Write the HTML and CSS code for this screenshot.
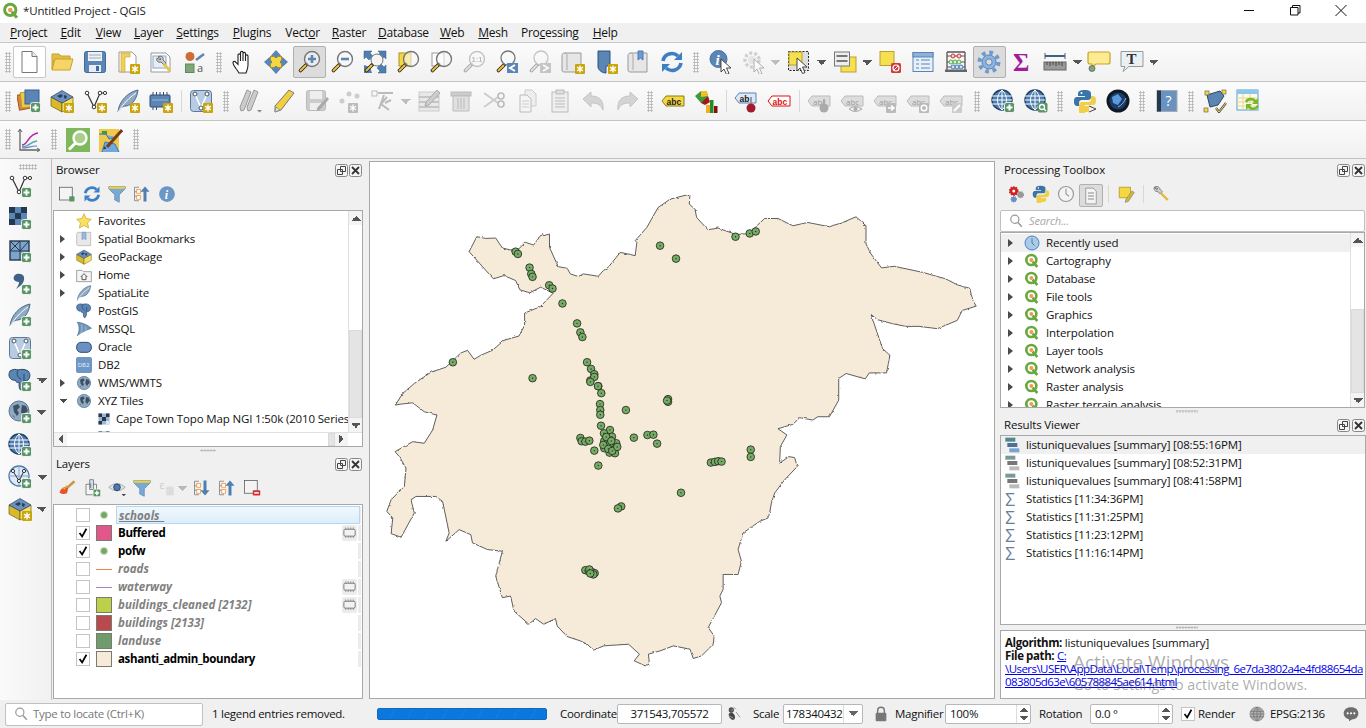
FILE: index.html
```html
<!DOCTYPE html>
<html lang="en">
<head>
<meta charset="utf-8">
<title>*Untitled Project - QGIS</title>
<link rel="stylesheet" href="styles.css">
</head>
<body>
<svg class="defs" aria-hidden="true">
<defs>
<g id="bstar"><rect x="14" y="14" width="10" height="10" rx="1" fill="#c9a40a"/><path d="M19 15.5v7M16 17.2l6 3.6M16 20.8l6-3.6" stroke="#fff" stroke-width="1.4"/></g>
<g id="bplus"><rect x="13.5" y="13.5" width="10" height="10" rx="2" fill="#5a9467" stroke="#fff" stroke-width=".8"/><path d="M18.5 15.5v6M15.5 18.5h6" stroke="#fff" stroke-width="2"/></g>
<path id="cur" d="M0 0v13l3-3 2.5 5.5 2.5-1-2.5-5.5h4.5z" fill="#fff" stroke="#333" stroke-width=".9"/>
<g id="mh"><path d="M9.5 14.5L3.5 20.5" stroke="#222" stroke-width="3.6" stroke-linecap="round"/><path d="M8.5 15.5L3.5 20.5" stroke="#eec23c" stroke-width="1.9" stroke-linecap="round"/></g>
<circle id="lens" cx="15" cy="9" r="7.5" fill="#f8f8f8" fill-opacity=".6" stroke="#777" stroke-width="1.4"/>
<g id="Vg"><path d="M4 4l7 14 6-14 5 0" fill="none" stroke="#333" stroke-width="1.2"/><circle cx="4" cy="4" r="1.8" fill="#fff" stroke="#333"/><circle cx="11" cy="18" r="1.8" fill="#fff" stroke="#333"/><circle cx="17" cy="4" r="1.8" fill="#fff" stroke="#333"/><circle cx="22" cy="4" r="1.6" fill="#fff" stroke="#333"/></g>
<g id="fth"><path d="M2 23C3 12 12 3 22 1c-1 8-5 15-12 16-3 0-5 1-8 6z" fill="#8fa9c4" stroke="#4a6a8a"/><path d="M2 23C8 14 13 9 20 4" stroke="#fff" fill="none"/></g>
<g id="gb"><circle cx="11" cy="11" r="10" fill="#8fa9c4" stroke="#5a7590"/><path d="M5 6l5-2 2 3-3 3 2 3-2 3-3-4zM14 5l4 1 2 5-3 2-1 3-3-4zM4 15l2 1 1 2z" fill="#3e4f60"/></g>
<g id="gridg"><circle cx="11" cy="11" r="10" fill="#4d7cb0" stroke="#1f3f66" stroke-width="1.4"/><path d="M1 7h20M1 11h20M1 15h20M11 1c-6 5-6 15 0 20M11 1c6 5 6 15 0 20M11 1v20" stroke="#fff" stroke-width="1" fill="none"/></g>
<g id="eleph"><path d="M2 3c3-2 6-2 8-1 3-1 7-1 10 1 3 3 2 7 0 9-2 1-3 1-4 1 0 4-1 9-3 9s-2-5-2-8c-2 1-3 0-4-2-3 1-6-2-6-5 0-1 0-2 1-4z" fill="#5b85b5" stroke="#2a4a6a"/><path d="M10 2c-2 4 0 8 3 9M16 6v7" stroke="#2a4a6a" fill="none"/></g>
<g id="boxg"><path d="M1 8l11 6v9L1 17z" fill="#d9b92a" stroke="#6f6010" stroke-width=".7"/><path d="M23 8L12 14v9l11-6z" fill="#f3df62" stroke="#6f6010" stroke-width=".7"/><path d="M1 8l11-6.500 11 6.500-11 6z" fill="#6b8fc0" stroke="#345" stroke-width=".7"/><path d="M7 7l4-2 2 2-3 2zM14 6l3 1-1 3-2-1z" fill="#2c3f55"/></g>
<g id="scroll"><path d="M4 3C1 3 1 5 1 6v14c0 2 2 2 3 2h16V3z" fill="#e6e6e6" stroke="#999"/><path d="M4 3c2 0 2 2 2 3v14" fill="none" stroke="#aaa"/></g>
<g id="meshg"><rect x="1.500" y="1.500" width="21" height="21" rx="3" fill="#b7cbe2" stroke="#5f7a99"/><path d="M6 5l6 14 6-14" fill="none" stroke="#fff" stroke-width="1.600"/><circle cx="6" cy="5" r="2" fill="#fff" stroke="#456"/><circle cx="12" cy="19" r="2" fill="#fff" stroke="#456"/><circle cx="18" cy="5" r="2" fill="#fff" stroke="#456"/></g>
<g id="tagg"><path d="M1 12l4-5h18v10H5z" fill="#ddd" stroke="#bbb"/><text class="ts" x="6" y="15.500" font-size="8" fill="#999">abc</text></g>
<g id="q"><circle cx="11" cy="10.500" r="7.500" fill="#fff" stroke="#6aa83f" stroke-width="4"/><path d="M13 13l7 8" stroke="#6aa83f" stroke-width="4"/><circle cx="11" cy="10.500" r="3" fill="#ee9b4a"/></g>
<symbol id="sq" viewBox="0 0 24 24"><use href="#q"/></symbol>
<symbol id="new" viewBox="0 0 24 24"><path d="M5 1.500h10l5 5v16H5z" fill="#fff" stroke="#777"/><path d="M15 1.500v5h5" fill="#eee" stroke="#777"/></symbol>
<symbol id="open" viewBox="0 0 24 24"><path d="M2 4h7l2 2h9v4H4L2 19z" fill="#e0bc48" stroke="#c9a227"/><path d="M5 9h18l-3 11H2z" fill="#f6d568" stroke="#c9a227"/></symbol>
<symbol id="save" viewBox="0 0 24 24"><rect x="1.500" y="1.500" width="21" height="21" rx="2" fill="#5b85b5" stroke="#3f6a9a"/><rect x="5" y="2" width="14" height="9" fill="#eef2f7"/><path d="M6 5h12M6 8h12" stroke="#9ab"/><rect x="6" y="15" width="12" height="7" fill="#e8edf3"/><rect x="13" y="16" width="3" height="5" fill="#3f6a9a"/></symbol>
<symbol id="saveas" viewBox="0 0 24 24"><path d="M3 2h13l4 4v16H3z" fill="#fff" stroke="#999"/><path d="M5 3h9v4H9v15H5z" fill="#f0cf5a" stroke="#c9a227" stroke-width=".6"/><use href="#bstar"/></symbol>
<symbol id="props" viewBox="0 0 24 24"><path d="M2 3h15l4 4v15H2z" fill="#fff" stroke="#999"/><rect x="4" y="6" width="13" height="12" fill="#e7eef7" stroke="#8aa8cc"/><path d="M9 7c3-2 6 0 5 3l3 3-2 2-3-3c-3 1-5-1-4-4l3 2 1-1z" fill="#ccc" stroke="#555" stroke-width=".8"/><path d="M15 14l6 7" stroke="#e8c44a" stroke-width="3"/></symbol>
<symbol id="style" viewBox="0 0 24 24"><circle cx="8" cy="6.500" r="4.500" fill="#cf6c38"/><path d="M14 10l8-6" stroke="#5b85b5" stroke-width="2.500"/><rect x="3.500" y="14" width="8.500" height="8.500" fill="#7fa77a" stroke="#5d8a5d"/><text class="ts" x="15" y="22" font-size="11" fill="#555">a</text></symbol>
<symbol id="hand" viewBox="0 0 24 24"><path d="M8 23C6 19 2 16 2 12.500c0-1.500 2-1.500 3 0l2 2V5c0-1.500 2.500-1.500 2.500 0v6V2.500c0-1.500 2.500-1.500 2.500 0V11V3.500c0-1.500 2.500-1.500 2.500 0V11V6c0-1.500 2.500-1.500 2.500 0v9c0 3-1 5-2 8z" fill="#fff" stroke="#222" stroke-width="1.100"/></symbol>
<symbol id="pansel" viewBox="0 0 24 24"><rect x="6.500" y="6.500" width="11" height="11" fill="#f5d840" stroke="#a89228"/><path d="M12 .5l4.500 5h-9zM12 23.500l4.500-5h-9zM.5 12l5-4.500v9zM23.500 12l-5-4.500v9z" fill="#5b85b5" stroke="#34608f" stroke-width=".6"/><path d="M12 5v3M12 16v3M5 12h3M16 12h3" stroke="#5b85b5" stroke-width="2.500"/></symbol>
<symbol id="zin" viewBox="0 0 24 24"><use href="#mh"/><use href="#lens"/><path d="M15 5v8M11 9h8" stroke="#5b85b5" stroke-width="2.600"/></symbol>
<symbol id="zout" viewBox="0 0 24 24"><use href="#mh"/><use href="#lens"/><path d="M11 9h8" stroke="#5b85b5" stroke-width="2.600"/></symbol>
<symbol id="zfull" viewBox="0 0 24 24"><path d="M1 1h8L7 3l3 3-4 4-3-3-2 2zM23 1h-8l2 2-3 3 4 4 3-3 2 2zM23 23h-8l2-2-3-3 4-4 3 3 2-2z" fill="#4f7eb0" stroke="#2f5d8e" stroke-width=".5"/><path d="M1 15l6 2 2 6H1z" fill="#4f7eb0"/><use href="#mh"/><circle cx="14" cy="10" r="6" fill="#f4f4f4" stroke="#777"/></symbol>
<symbol id="zsel" viewBox="0 0 24 24"><rect x="3" y="3" width="12" height="13" fill="#f5d840" stroke="#a89228"/><use href="#mh"/><use href="#lens"/></symbol>
<symbol id="zlayer" viewBox="0 0 24 24"><rect x="3" y="3" width="12" height="13" fill="#fff" stroke="#999"/><use href="#mh"/><use href="#lens"/></symbol>
<symbol id="z11" viewBox="0 0 24 24"><use href="#mh"/><use href="#lens"/><text class="tb2" x="9.500" y="11.500" font-size="7.500" fill="#666">1:1</text></symbol>
<symbol id="zlast" viewBox="0 0 24 24"><use href="#mh"/><circle cx="13" cy="8" r="7" fill="#f8f8f8" stroke="#777" stroke-width="1.300"/><rect x="12" y="13" width="11" height="10" fill="#5b85b5"/><path d="M20 15l-5 3 5 3" fill="none" stroke="#fff" stroke-width="2"/></symbol>
<symbol id="znext" viewBox="0 0 24 24"><use href="#mh"/><circle cx="13" cy="8" r="7" fill="#f8f8f8" stroke="#777" stroke-width="1.300"/><rect x="12" y="13" width="11" height="10" fill="#5b85b5"/><path d="M15 15l5 3-5 3" fill="none" stroke="#fff" stroke-width="2"/></symbol>
<symbol id="bmnew" viewBox="0 0 24 24"><use href="#scroll"/><use href="#bstar"/></symbol>
<symbol id="bmshow" viewBox="0 0 24 24"><path d="M4 1h12v15h-4v7C7 23 4 19 4 17z" fill="#5b85b5" stroke="#2c5280"/><use href="#bstar"/></symbol>
<symbol id="bm3" viewBox="0 0 24 24"><use href="#scroll"/><path d="M11 1h5v9l-2.500-2-2.500 2z" fill="#6b9bd2" stroke="#4a7ab0"/></symbol>
<symbol id="refresh" viewBox="0 0 24 24"><path d="M3 11a9 9 0 0 1 15-5" fill="none" stroke="#3d7fc4" stroke-width="3.600"/><path d="M22 2v8h-8z" fill="#3d7fc4"/><path d="M21 13a9 9 0 0 1-15 5" fill="none" stroke="#3d7fc4" stroke-width="3.600"/><path d="M2 22v-8h8z" fill="#3d7fc4"/></symbol>
<symbol id="ident" viewBox="0 0 24 24"><circle cx="9.500" cy="9" r="8.500" fill="#5b85b5" stroke="#4a72a0"/><text class="ti" x="6.500" y="14.500" font-size="15" fill="#fff">i</text><use href="#cur" x="12" y="9"/></symbol>
<symbol id="selc" viewBox="0 0 24 24"><circle cx="10" cy="10" r="7" fill="none" stroke="#999" stroke-width="3.500" stroke-dasharray="3 2"/><circle cx="10" cy="10" r="4" fill="#ccc"/><use href="#cur" x="12" y="9"/></symbol>
<symbol id="selr" viewBox="0 0 24 24"><rect x="1.500" y="1.500" width="20" height="19" fill="#ddd" stroke="#222" stroke-dasharray="2 1.500"/><rect x="2" y="2" width="13" height="13" fill="#f5e050" stroke="#b9a030"/><use href="#cur" x="10" y="8"/></symbol>
<symbol id="form" viewBox="0 0 24 24"><rect x="8" y="7" width="15" height="15" fill="#f5e050" stroke="#b9a030"/><rect x="1.500" y="2" width="15" height="14" fill="#eee" stroke="#777"/><path d="M3.500 6h11M3.500 11h11" stroke="#777" stroke-width="2"/></symbol>
<symbol id="desel" viewBox="0 0 24 24"><rect x="2" y="1.500" width="14" height="14" fill="#f5e050" stroke="#b9a030"/><rect x="13" y="13" width="10" height="10" rx="1.500" fill="#d03a3a"/><circle cx="18" cy="18" r="3" stroke="#fff" fill="none" stroke-width="1.200"/><path d="M15.900 20.100l4.200-4.200" stroke="#fff"/></symbol>
<symbol id="attr" viewBox="0 0 24 24"><rect x="2" y="2.500" width="20" height="19" fill="#e8f0f8" stroke="#5b85b5"/><rect x="2" y="2.500" width="20" height="4.500" fill="#8fb0d8" stroke="#5b85b5"/><path d="M5 10h3M5 14h3M5 18h3M10 10h9M10 14h9M10 18h9" stroke="#5b85b5"/></symbol>
<symbol id="abac" viewBox="0 0 24 24"><path d="M3 2v19M21 2v19M3 2h18" fill="none" stroke="#555" stroke-width="1.300"/><rect x="1" y="19.500" width="22" height="2.500" fill="#666"/><path d="M3 6h18M3 12h18M3 17h18" stroke="#555"/><circle cx="9" cy="6" r="2" fill="#f8d0d0" stroke="#c33"/><circle cx="15" cy="6" r="2" fill="#f8d0d0" stroke="#c33"/><circle cx="7" cy="12" r="2" fill="#d8f0d0" stroke="#5a5"/><circle cx="11" cy="12" r="2" fill="#d8f0d0" stroke="#5a5"/><circle cx="15" cy="12" r="2" fill="#d8f0d0" stroke="#5a5"/><circle cx="9" cy="17" r="2" fill="#d0e4f8" stroke="#47b"/><circle cx="13" cy="17" r="2" fill="#d0e4f8" stroke="#47b"/><circle cx="17" cy="17" r="2" fill="#d0e4f8" stroke="#47b"/></symbol>
<symbol id="gear" viewBox="0 0 24 24"><circle cx="12" cy="12" r="9.500" fill="none" stroke="#6b9bd2" stroke-width="4" stroke-dasharray="3.730 3.730"/><circle cx="12" cy="12" r="7" fill="#8db3e2" stroke="#5b85b5"/><circle cx="12" cy="12" r="3.200" fill="#dcdcdc" stroke="#5b85b5"/></symbol>
<symbol id="sigma" viewBox="0 0 24 24"><text class="tsg" x="3" y="21" font-size="25" fill="#a01c9c">Σ</text></symbol>
<symbol id="ruler" viewBox="0 0 24 24"><path d="M2 6h20" stroke="#44607f" stroke-width="2"/><path d="M2 3v6M22 3v6" stroke="#44607f"/><rect x="1" y="12" width="22" height="8" fill="#999" stroke="#666"/><path d="M4 12v3M7 12v4M10 12v3M13 12v4M16 12v3M19 12v4" stroke="#444"/></symbol>
<symbol id="tip" viewBox="0 0 24 24"><path d="M3 2h18q2 0 2 2v8q0 2-2 2H9l-4 3v-3H3q-2 0-2-2V4q0-2 2-2z" fill="#fdeb92" stroke="#c9a227" stroke-width="1.200"/><circle cx="5" cy="18.500" r="3" fill="#7fa77a" stroke="#555" stroke-width=".7"/></symbol>
<symbol id="ttext" viewBox="0 0 24 24"><path d="M1 1.500h22v15H9l-6 5 2-5H1z" fill="#eaf1f5" stroke="#999"/><text class="tsg" x="6.500" y="14" font-size="15" fill="#333">T</text></symbol>
<symbol id="dsm" viewBox="0 0 24 24"><rect x="1" y="5" width="14" height="15" fill="#d8843c" stroke="#a05a20" transform="rotate(-10 8 12)"/><rect x="4" y="3" width="14" height="15" fill="#f0c94a" stroke="#b9a030" transform="rotate(-6 11 10)"/><rect x="8" y="1" width="14" height="14" fill="#5b85b5" stroke="#34608f"/><use href="#bplus"/></symbol>
<symbol id="box" viewBox="0 0 24 24"><use href="#boxg"/><use href="#bstar"/></symbol>
<symbol id="newv" viewBox="0 0 24 24"><use href="#Vg"/><use href="#bstar"/></symbol>
<symbol id="fstar" viewBox="0 0 24 24"><use href="#fth"/><use href="#bstar"/></symbol>
<symbol id="feather" viewBox="0 0 24 24"><use href="#fth"/></symbol>
<symbol id="chip" viewBox="0 0 24 24"><rect x="1" y="6" width="20" height="12" rx="1" fill="#5b85b5" stroke="#2f4f70"/><path d="M4 3v3M7.500 3v3M11 3v3M14.500 3v3M18 3v3M4 18v3M7.500 18v3" stroke="#2f4f70"/><path d="M3 11h16" stroke="#9ab8d8"/><use href="#bstar"/></symbol>
<symbol id="meshs" viewBox="0 0 24 24"><use href="#meshg"/><use href="#bstar"/></symbol>
<symbol id="pens" viewBox="0 0 24 24"><path d="M8 1l4 2-7 18-3 1-1-4zM15 1l4 2-7 18-3 1-1-4z" fill="#ccc" stroke="#999"/><path d="M18 21l5 0-2.500 2.500z" fill="#888"/></symbol>
<symbol id="pencil" viewBox="0 0 24 24"><path d="M17 1l5 3L9 21l-6 2 0-6z" fill="#f0d040" stroke="#777"/><path d="M3 23l1-5 4 3z" fill="#ddd" stroke="#777" stroke-width=".6"/></symbol>
<symbol id="savep" viewBox="0 0 24 24"><rect x="1.500" y="1.500" width="19" height="20" rx="2" fill="#ccc" stroke="#bbb"/><rect x="5" y="2" width="12" height="8" fill="#eee"/><rect x="5" y="14" width="11" height="7" fill="#eee"/><path d="M22 8l2 2-9 11-3 1 0-3z" fill="#aaa"/></symbol>
<symbol id="pts" viewBox="0 0 24 24"><circle cx="4" cy="12" r="2.500" fill="#ccc"/><circle cx="11" cy="5" r="2.500" fill="#ccc"/><circle cx="19" cy="7" r="2.500" fill="#ccc"/><rect x="10" y="14" width="10" height="10" rx="1" fill="#bbb"/><path d="M15 15.500v7M12 17.200l6 3.600M12 20.800l6-3.600" stroke="#fff" stroke-width="1.300"/></symbol>
<symbol id="vtool" viewBox="0 0 24 24"><rect x="1" y="2" width="5" height="5" fill="none" stroke="#bbb"/><path d="M7 4h15M8 20l5-14M16 8l-6 7 8 6M14 14l6-3" fill="none" stroke="#bbb" stroke-width="2"/></symbol>
<symbol id="rows" viewBox="0 0 24 24"><rect x="2" y="3" width="20" height="19" fill="#e8e8e8" stroke="#ccc"/><path d="M2 8h20M2 13h20M2 18h20" stroke="#bbb" stroke-width="1.500"/><path d="M20 1l3 3-11 12-4 1 1-4z" fill="#ccc" stroke="#aaa"/></symbol>
<symbol id="trash" viewBox="0 0 24 24"><rect x="1" y="3" width="20" height="4" fill="#ccc" stroke="#bbb"/><path d="M3 7h16v15H3z" fill="#e0e0e0" stroke="#bbb"/><path d="M8 9v11M11 9v11M14 9v11" stroke="#bbb"/></symbol>
<symbol id="sciss" viewBox="0 0 24 24"><path d="M1 4l14 10M1 18L15 8" stroke="#ccc" stroke-width="1.800"/><circle cx="18" cy="7" r="3" fill="none" stroke="#bbb" stroke-width="1.600"/><circle cx="18" cy="15" r="3" fill="none" stroke="#bbb" stroke-width="1.600"/></symbol>
<symbol id="copyi" viewBox="0 0 24 24"><path d="M9 1h7l4 4v12H9z" fill="#eee" stroke="#ccc"/><path d="M4 6h7l4 4v13H4z" fill="#f5f5f5" stroke="#bbb"/><path d="M6 12h7M6 15h7M6 18h7" stroke="#ccc"/></symbol>
<symbol id="paste" viewBox="0 0 24 24"><rect x="3" y="3" width="16" height="20" fill="#eee" stroke="#bbb"/><rect x="7" y="1" width="8" height="4" fill="#ddd" stroke="#bbb"/><path d="M6 9h10M6 12h10M6 15h10M6 18h10" stroke="#bbb"/></symbol>
<symbol id="undo" viewBox="0 0 24 24"><path d="M1 10l8-7v4c8 0 13 4 12 14-2-5-5-7-12-7v4z" fill="#d4d4d4" stroke="#c4c4c4"/></symbol>
<symbol id="redo" viewBox="0 0 24 24"><path d="M23 10l-8-7v4C7 7 2 11 3 21c2-5 5-7 12-7v4z" fill="#d4d4d4" stroke="#c4c4c4"/></symbol>
<symbol id="lbl" viewBox="0 0 24 24"><path d="M1 12l4-5h18v10H5z" fill="#f5d840" stroke="#8a7a20"/><text class="tb2" x="5.500" y="15.500" font-size="8.500" fill="#222">abc</text></symbol>
<symbol id="diag" viewBox="0 0 24 24"><path d="M1 7l6-5 7 3-1 7-6 2z" fill="#3c9a3c"/><path d="M7 2l6 0 1 5-7 1z" fill="#f0c020"/><path d="M14 7l2 6-5 3-4-2z" fill="#a01818"/><rect x="12" y="16" width="4" height="8" fill="#f0b020"/><rect x="16" y="11" width="3.500" height="13" fill="#2a8a2a"/><rect x="20" y="17" width="3.500" height="7" fill="#8a1010"/></symbol>
<symbol id="pin" viewBox="0 0 24 24"><path d="M1 9l4-5h17v10H5z" fill="#dce8f6" stroke="#5b85b5"/><text class="tb2" x="5.500" y="12.500" font-size="8.500" fill="#222">ab</text><path d="M17 8v8" stroke="#999" stroke-width="2"/><circle cx="17" cy="19" r="4.500" fill="#a01c2c"/></symbol>
<symbol id="lblr" viewBox="0 0 24 24"><path d="M1 12l4-5h18v10H5z" fill="#fff" stroke="#e01010"/><text class="tb2" x="5.500" y="15.500" font-size="8.500" fill="#e01010">abc</text></symbol>
<symbol id="ab1" viewBox="0 0 24 24"><use href="#tagg"/><path d="M17 10v6" stroke="#aaa" stroke-width="2"/><circle cx="17" cy="19" r="4.500" fill="#aaa"/></symbol>
<symbol id="ab2" viewBox="0 0 24 24"><use href="#tagg"/><path d="M9 20q6-5 13 0-7 5-13 0z" fill="#eee" stroke="#aaa"/><circle cx="15.500" cy="20" r="2" fill="#aaa"/></symbol>
<symbol id="ab3" viewBox="0 0 24 24"><use href="#tagg"/><rect x="13" y="14" width="10" height="10" rx="1" fill="#bbb"/><path d="M15 19h5M18 16.500l3 2.500-3 2.500" stroke="#fff" stroke-width="1.600" fill="none"/></symbol>
<symbol id="ab4" viewBox="0 0 24 24"><use href="#tagg"/><rect x="13" y="14" width="10" height="10" rx="1" fill="#bbb"/><circle cx="18" cy="19" r="2.800" fill="none" stroke="#fff" stroke-width="1.400"/></symbol>
<symbol id="ab5" viewBox="0 0 24 24"><use href="#tagg"/><rect x="13" y="14" width="10" height="10" rx="1" fill="#ccc"/><path d="M15 22l6-6" stroke="#fff" stroke-width="2"/></symbol>
<symbol id="gplus" viewBox="0 0 24 24"><use href="#gridg"/><use href="#bplus"/></symbol>
<symbol id="gsearch" viewBox="0 0 24 24"><use href="#gridg"/><rect x="13.500" y="13.500" width="10" height="10" rx="2" fill="#5a9467"/><circle cx="18" cy="18" r="2.500" fill="none" stroke="#fff" stroke-width="1.300"/><path d="M20 20l2 2" stroke="#fff" stroke-width="1.300"/></symbol>
<symbol id="py" viewBox="0 0 24 24"><path d="M12 1c-5 0-7 1-7 4v2h7v1H4c-3 0-3 3-3 5s1 4 3 4h2v-3c0-2 1-3 3-3h6c2 0 3-1 3-3V5c0-3-2-4-6-4z" fill="#3a74a8"/><path d="M12 23c5 0 7-1 7-4v-2h-7v-1h8c3 0 3-3 3-5s-1-4-3-4h-2v3c0 2-1 3-3 3H9c-2 0-3 1-3 3v6c0 3 2 4 6 4z" fill="#f2cf4a"/><circle cx="8.500" cy="4" r="1" fill="#fff"/></symbol>
<symbol id="pyc" viewBox="0 0 24 24"><use href="#py"/><path d="M16 17l7 3-7 3" fill="#f4f4f4" stroke="#444"/></symbol>
<symbol id="earth" viewBox="0 0 24 24"><circle cx="12" cy="12" r="11.500" fill="#101820"/><circle cx="12" cy="12" r="8.500" fill="#1b3c6a"/><path d="M6 8l6-3 4 5-4 6-5-2z" fill="#5b9adf"/><path d="M12 18c4-2 6-5 8-9" stroke="#8cb7e8" fill="none"/></symbol>
<symbol id="help" viewBox="0 0 24 24"><rect x="2" y="1.500" width="20" height="21" fill="#6a92c0" stroke="#aaa"/><rect x="2" y="1.500" width="4" height="21" fill="#24384f"/><text class="ts" x="10.500" y="16.500" font-size="14" fill="#fff">?</text></symbol>
<symbol id="topo" viewBox="0 0 24 24"><path d="M4 6l13-4 4 5-6 9-8 2z" fill="#5b85b5" stroke="#345"/><rect x="2" y="2" width="4" height="4" fill="#f5d840" stroke="#555" stroke-width=".6"/><rect x="19" y="1" width="4" height="4" fill="#f5d840" stroke="#555" stroke-width=".6"/><rect x="1" y="19" width="4" height="4" fill="#f5d840" stroke="#555" stroke-width=".6"/><path d="M13 19l3 4 7-9" fill="none" stroke="#444" stroke-width="2.200"/><path d="M13 19l3 4 7-9" fill="none" stroke="#f0e060" stroke-width="1"/></symbol>
<symbol id="tsync" viewBox="0 0 24 24"><rect x="1" y="1" width="21" height="20" fill="#fafaf0" stroke="#5b9bd2"/><rect x="1" y="1" width="21" height="4" fill="#8ec6ec"/><path d="M1 9h21M1 13h21M1 17h21M7 5v16M14 5v16" stroke="#e8d888"/><path d="M9 12c2-4 8-4 11-1l2-2v6h-6l2-2c-2-2-6-2-7 1z" fill="#77b82a"/><path d="M23 15c-2 5-8 5-11 2l-2 2v-6h6l-2 2c2 2 6 2 7-1z" fill="#77b82a" transform="translate(0 2)"/></symbol>
<symbol id="graph" viewBox="0 0 24 24"><path d="M3 2v20h19" fill="none" stroke="#666" stroke-width="1.300"/><path d="M1 4l2-3 2 3M20 20l3 2-3 2" fill="none" stroke="#666"/><path d="M5 17c6 0 6-11 16-12" fill="none" stroke="#b026a8" stroke-width="1.500"/><path d="M5 19c6 0 8-5 15-6" fill="none" stroke="#5ba8a8" stroke-width="1.500"/><path d="M5 20c6 0 8-2 15-2" fill="none" stroke="#5b85d0" stroke-width="1.200"/></symbol>
<symbol id="zgreen" viewBox="0 0 24 24"><rect width="24" height="24" fill="#7fb85c"/><circle cx="14" cy="10" r="6.500" fill="#a8d08c" stroke="#fff" stroke-width="2.400"/><path d="M9.500 15L3 21.500" stroke="#fff" stroke-width="3"/></symbol>
<symbol id="medit" viewBox="0 0 24 24"><rect y="1" width="20" height="23" fill="#f0c94a"/><path d="M0 6h7l3 5 8-2M3 24l3-10 10 2 4 8" fill="#6fa8dc" stroke="#3a78c0"/><path d="M3 3h5v3H3z" fill="#3c9a3c"/><path d="M8 19L23 2" stroke="#7a3b1a" stroke-width="3"/><path d="M4 21l3 0-1-3z" fill="#333"/></symbol>
<symbol id="ap" viewBox="0 0 24 24"><use href="#Vg"/><use href="#bplus"/></symbol>
<symbol id="ar" viewBox="0 0 24 24"><rect x="1" y="1" width="18" height="18" fill="#5b85b5"/><path d="M1 1h6v6H1zM13 1h6v6h-6zM7 7h6v6H7zM1 13h6v6H1z" fill="#24384f"/><use href="#bplus"/></symbol>
<symbol id="checker" viewBox="0 0 24 24"><rect x="1" y="1" width="22" height="22" fill="#9db5d1"/><path d="M1 1h7v7H1zM16 1h7v7h-7zM8 8h8v8H8zM1 16h7v7H1z" fill="#24384f"/><path d="M16 16h7v7h-7z" fill="#dfe8f2"/></symbol>
<symbol id="am" viewBox="0 0 24 24"><rect x="2" y="2" width="19" height="19" fill="#7fa4cc" stroke="#24384f" stroke-width="1.400"/><path d="M2 2l10 10M12 2L2 12M12 12L21 2M2 12h19M12 2v19" stroke="#24384f"/><use href="#bplus"/></symbol>
<symbol id="ac" viewBox="0 0 24 24"><path d="M7 4c2-2 8-2 9 2 1 5-3 9-8 12 2-3 3-5 3-7-5 0-7-4-4-7z" fill="#3f6287"/><use href="#bplus"/></symbol>
<symbol id="af" viewBox="0 0 24 24"><use href="#fth"/><use href="#bplus"/></symbol>
<symbol id="amv" viewBox="0 0 24 24"><use href="#meshg"/><use href="#bplus"/></symbol>
<symbol id="apg" viewBox="0 0 24 24"><use href="#eleph"/><use href="#bplus"/></symbol>
<symbol id="agb" viewBox="0 0 24 24"><use href="#gb"/><use href="#bplus"/></symbol>
<symbol id="agv" viewBox="0 0 24 24"><circle cx="11" cy="11" r="10" fill="#dfeaf6" stroke="#4d7cb0" stroke-width="1.300"/><path d="M1 11h20M11 1v20" stroke="#7ea6d0"/><path d="M5 6l6 10 5-10" fill="none" stroke="#333"/><circle cx="5" cy="6" r="1.600" fill="#fff" stroke="#333"/><circle cx="11" cy="16" r="1.600" fill="#fff" stroke="#333"/><circle cx="16" cy="6" r="1.600" fill="#fff" stroke="#333"/><use href="#bplus"/></symbol>
<symbol id="ags" viewBox="0 0 24 24"><use href="#gridg"/><use href="#bplus"/></symbol>
<symbol id="star" viewBox="0 0 24 24"><path d="M12 1l3.400 7.300 7.600 1-5.600 5.300 1.500 8L12 18.700l-6.900 3.900 1.500-8L1 9.300l7.600-1z" fill="#f8e060" stroke="#c9a227"/></symbol>
<symbol id="bmk" viewBox="0 0 24 24"><path d="M4 2C1 2 1 4 1 5v14c0 2 2 3 3 3h18V2z" fill="#e8e8e8" stroke="#aaa"/><path d="M9 2h6v11l-3-2-3 2z" fill="#9cb8d8" stroke="#7a9abf"/></symbol>
<symbol id="gpk" viewBox="0 0 24 24"><use href="#boxg"/></symbol>
<symbol id="home" viewBox="0 0 24 24"><path d="M1 5h8l2 2h12v15H1z" fill="#f6f6f6" stroke="#777"/><path d="M7 15l5-5 5 5M9 14v5h6v-5" fill="none" stroke="#333" stroke-width="1.200"/></symbol>
<symbol id="pg" viewBox="0 0 24 24"><use href="#eleph"/></symbol>
<symbol id="mss" viewBox="0 0 24 24"><path d="M2 2c6 0 16 4 21 9-5 2-15 5-21 11 3-6 4-14 0-20z" fill="#6f94bf" stroke="#4a6a8a"/><path d="M8 5c2 5 1 10-1 13M14 8c1 3 1 5 0 8" stroke="#b8cde2" fill="none"/></symbol>
<symbol id="ora" viewBox="0 0 24 24"><rect x="1" y="5" width="22" height="15" rx="6.500" fill="#6b8fc0" stroke="#2f4f70" stroke-width="1.500"/></symbol>
<symbol id="db2" viewBox="0 0 24 24"><rect x="0" y="0" width="24" height="24" rx="3" fill="#6f97c6"/><text class="ts" x="2.500" y="15.500" font-size="9" fill="#e8eff8">DB2</text></symbol>
<symbol id="globe" viewBox="0 0 24 24"><g transform="translate(1 1)"><use href="#gb"/></g></symbol>
<symbol id="clock" viewBox="0 0 24 24"><circle cx="12" cy="12" r="10.500" fill="#a8cbea" stroke="#4a7ab0" stroke-width="1.400"/><path d="M12 5v7l4 4" fill="none" stroke="#4a6a8a" stroke-width="1.300"/></symbol>
<symbol id="clockg" viewBox="0 0 24 24"><circle cx="12" cy="12" r="10" fill="#f4f4f4" stroke="#999" stroke-width="1.600"/><path d="M12 5v7l4 3" fill="none" stroke="#999" stroke-width="1.500"/></symbol>
<symbol id="gears" viewBox="0 0 24 24"><circle cx="9" cy="8" r="5.500" fill="#d02020" stroke="#d02020" stroke-dasharray="2 1.500" stroke-width="2"/><circle cx="9" cy="8" r="2" fill="#fff"/><circle cx="18" cy="13" r="4" fill="#999" stroke="#999" stroke-dasharray="1.600 1.200" stroke-width="1.600"/><circle cx="9" cy="19" r="3.500" fill="#6b8fc0" stroke="#6b8fc0" stroke-dasharray="1.500 1" stroke-width="1.400"/></symbol>
<symbol id="docg" viewBox="0 0 24 24"><path d="M5 1.500h10l4 4v17H5z" fill="#f4f4f4" stroke="#888"/><path d="M8 8h8M8 12h8M8 16h8" stroke="#888" stroke-width="1.300"/></symbol>
<symbol id="note" viewBox="0 0 24 24"><path d="M3 3h15v14H3z" fill="#f5d840" stroke="#a89228"/><path d="M20 8l3 2-8 12-4 1 1-4z" fill="#d8b830" stroke="#888"/></symbol>
<symbol id="wrench" viewBox="0 0 24 24"><path d="M3 3c3-2 7-1 8 3l3 3-3 3-3-3c-4 0-6-3-5-6l3 3 2-1z" fill="#ccc" stroke="#666"/><path d="M12 11l9 9" stroke="#e2b93a" stroke-width="3.200"/></symbol>
<symbol id="stack" viewBox="0 0 24 24"><rect x="2" y="1" width="15" height="6" fill="#4f8a8a"/><rect x="5" y="9" width="15" height="6" fill="#4f6f99"/><rect x="8" y="17" width="15" height="6" fill="#7ba3cf"/></symbol>
<symbol id="stackg" viewBox="0 0 24 24"><rect x="2" y="1" width="15" height="6" fill="#7a9a9a"/><rect x="5" y="9" width="15" height="6" fill="#777"/><rect x="8" y="17" width="15" height="6" fill="#bbb"/></symbol>
<symbol id="sumi" viewBox="0 0 24 24"><text class="ts" x="2" y="22" font-size="26" fill="#6c7f99">Σ</text></symbol>
<symbol id="funnel" viewBox="0 0 24 24"><path d="M1 2h22v3l-8 8v10l-6-3v-7L1 5z" fill="#7ba9d4" stroke="#5a8ab5"/><path d="M1 2h22v3H1z" fill="#f0d040"/></symbol>
<symbol id="cbtn" viewBox="0 0 24 24"><rect x="2" y="3" width="17" height="17" fill="#f4f4f4" stroke="#555"/><rect x="15" y="15" width="7" height="7" rx="1" fill="#5a9467"/></symbol>
<symbol id="coll" viewBox="0 0 24 24"><path d="M2 3h6M2 3v18h6M2 9h6M2 15h6" fill="none" stroke="#777"/><rect x="5" y="6" width="5" height="5" fill="#fff" stroke="#f09030"/><rect x="5" y="14" width="5" height="5" fill="#fff" stroke="#f09030"/><path d="M16 2l6 7h-4v13h-4V9h-4z" fill="#4f7eb0"/></symbol>
<symbol id="exp" viewBox="0 0 24 24"><path d="M2 3h6M2 3v18h6M2 9h6M2 15h6" fill="none" stroke="#777"/><rect x="5" y="6" width="5" height="5" fill="#fff" stroke="#f09030"/><rect x="5" y="14" width="5" height="5" fill="#fff" stroke="#f09030"/><path d="M16 22l6-7h-4V2h-4v13h-4z" fill="#4f7eb0"/></symbol>
<symbol id="infoi" viewBox="0 0 24 24"><circle cx="12" cy="12" r="10.500" fill="#6b97c6"/><text class="ti" x="9" y="18" font-size="16" fill="#fff">i</text></symbol>
<symbol id="brush" viewBox="0 0 24 24"><path d="M2 18c2-6 8-9 12-7l-2 8c-4 2-7 1-10-1z" fill="#e8542a"/><path d="M6 12l3 2 2-5 3 2" fill="#f0c94a" stroke="#c9a227"/><path d="M13 11l9-8" stroke="#c79a4a" stroke-width="3.500"/></symbol>
<symbol id="lydup" viewBox="0 0 24 24"><path d="M4 7h14v14H4z" fill="#f4f4f4" stroke="#666"/><rect x="9" y="1" width="5" height="13" fill="#cfe0f0" stroke="#666"/><text class="ts" x="9" y="12" font-size="9" fill="#333">i</text><use href="#bplus"/></symbol>
<symbol id="eye" viewBox="0 0 24 24"><path d="M1 11q11-10 22 0-11 10-22 0z" fill="#dbe6f1" stroke="#999"/><circle cx="12" cy="11" r="4.500" fill="#4a7ab0" stroke="#234"/><path d="M18 20h6l-3 3z" fill="#444"/></symbol>
<symbol id="eps" viewBox="0 0 24 24"><text class="ts" x="2" y="13" font-size="14" fill="#ccc">ε</text><rect x="11" y="10" width="10" height="12" rx="2" fill="#ddd"/></symbol>
<symbol id="rmv" viewBox="0 0 24 24"><rect x="2" y="2" width="17" height="17" fill="#f4f4f4" stroke="#555"/><rect x="13" y="15" width="10" height="7" rx="1" fill="#d83030"/><path d="M15 18.500h6" stroke="#fff" stroke-width="2"/></symbol>
<symbol id="chipi" viewBox="0 0 24 24"><rect x="3" y="6" width="18" height="11" rx="2" fill="#f2f2f2" stroke="#666" stroke-width="1.300"/><path d="M6 3v3M10 3v3M14 3v3M18 3v3M6 17v3M10 17v3M14 17v3M18 17v3" stroke="#666"/></symbol>
<symbol id="mouse" viewBox="0 0 24 24"><circle cx="8" cy="6" r="4" fill="#555"/><path d="M4 12q5-5 9 2 2 6-3 7-6-2-6-9z" fill="#444"/><path d="M12 2l3 3M15 9l6 8M8 6h3M5 15l6 3" stroke="#999" stroke-width="1.500"/></symbol>
<symbol id="lock" viewBox="0 0 24 24"><path d="M7 11V7a5 5 0 0 1 10 0v4" fill="none" stroke="#777" stroke-width="2.200"/><rect x="4" y="10" width="16" height="13" rx="1.500" fill="#777"/></symbol>
<symbol id="gs" viewBox="0 0 24 24"><circle cx="12" cy="12" r="10.500" fill="#b0b0b0" stroke="#777"/><path d="M2 8h20M2 12h20M2 16h20M12 2c-7 5-7 15 0 20M12 2c7 5 7 15 0 20M12 2v20" stroke="#666" fill="none" stroke-width=".9"/></symbol>
<symbol id="msg" viewBox="0 0 24 24"><path d="M12 2C5 2 1 6 1 11s4 8 8 9v3l5-3c6 0 9-4 9-9s-4-9-11-9z" fill="#6e6e6e"/><circle cx="7" cy="11" r="1.600" fill="#fff"/><circle cx="12" cy="11" r="1.600" fill="#fff"/><circle cx="17" cy="11" r="1.600" fill="#fff"/></symbol>
<symbol id="srch" viewBox="0 0 24 24"><circle cx="10" cy="9" r="7" fill="none" stroke="#999" stroke-width="2"/><path d="M15 14l7 8" stroke="#999" stroke-width="2.600"/></symbol>
<symbol id="ck" viewBox="0 0 14 14"><path d="M3 7l3 4 5-9" fill="none" stroke="#000" stroke-width="2"/></symbol>
<g id="p"><circle r="3.800" fill="#76ad64" stroke="#2b2f28" stroke-width=".9"/><circle r=".7" fill="#27301f"/></g>
<filter id="rough" x="370" y="161" width="624" height="538" filterUnits="userSpaceOnUse"><feTurbulence type="fractalNoise" baseFrequency=".25" numOctaves="2" seed="4"/><feDisplacementMap in="SourceGraphic" scale="2.400" xChannelSelector="R" yChannelSelector="G"/></filter>
</defs>
</svg>

<div class="app">
  <header class="titlebar">
    <svg class="logo"><use href="#sq"/></svg>
    <span class="title">*Untitled Project - QGIS</span>
    <div class="winbtns">
      <svg class="wb" viewBox="0 0 46 23"><path d="M18 10.500h10" stroke="#111" fill="none"/></svg>
      <svg class="wb" viewBox="0 0 46 23"><path d="M18.500 7.500h7.500v7.500h-7.500zM20.500 7.500v-2h7.500v7.500h-2" stroke="#111" fill="none"/></svg>
      <svg class="wb" viewBox="0 0 46 23"><path d="M17.500 5l11 11M28.500 5l-11 11" stroke="#111" fill="none"/></svg>
    </div>
  </header>
  <nav class="menubar">
    <span><u>P</u>roject</span><span><u>E</u>dit</span><span><u>V</u>iew</span><span><u>L</u>ayer</span><span><u>S</u>ettings</span><span><u>P</u>lugins</span><span>Vect<u>o</u>r</span><span><u>R</u>aster</span><span><u>D</u>atabase</span><span><u>W</u>eb</span><span><u>M</u>esh</span><span>Pro<u>c</u>essing</span><span><u>H</u>elp</span>
  </nav>

  <div class="tb">
    <i class="grip lead"></i>
    <span class="b hov"><svg class="i"><use href="#new"/></svg></span>
    <span class="b"><svg class="i"><use href="#open"/></svg></span>
    <span class="b"><svg class="i"><use href="#save"/></svg></span>
    <span class="b"><svg class="i"><use href="#saveas"/></svg></span>
    <span class="b"><svg class="i"><use href="#props"/></svg></span>
    <span class="b"><svg class="i"><use href="#style"/></svg></span>
    <i class="grip g16"></i>
    <span class="b"><svg class="i"><use href="#hand"/></svg></span>
    <span class="b"><svg class="i"><use href="#pansel"/></svg></span>
    <span class="b act"><svg class="i"><use href="#zin"/></svg></span>
    <span class="b"><svg class="i"><use href="#zout"/></svg></span>
    <span class="b"><svg class="i"><use href="#zfull"/></svg></span>
    <span class="b"><svg class="i"><use href="#zsel"/></svg></span>
    <span class="b"><svg class="i"><use href="#zlayer"/></svg></span>
    <span class="b"><svg class="i off"><use href="#z11"/></svg></span>
    <span class="b"><svg class="i"><use href="#zlast"/></svg></span>
    <span class="b"><svg class="i off"><use href="#znext"/></svg></span>
    <span class="b"><svg class="i"><use href="#bmnew"/></svg></span>
    <span class="b"><svg class="i"><use href="#bmshow"/></svg></span>
    <span class="b"><svg class="i"><use href="#bm3"/></svg></span>
    <span class="b"><svg class="i"><use href="#refresh"/></svg></span>
    <i class="grip g155"></i>
    <span class="b"><svg class="i"><use href="#ident"/></svg></span>
    <span class="b"><svg class="i off"><use href="#selc"/></svg></span><i class="dd pale"></i>
    <span class="b"><svg class="i"><use href="#selr"/></svg></span><i class="dd"></i>
    <span class="b"><svg class="i"><use href="#form"/></svg></span><i class="dd"></i>
    <span class="b"><svg class="i"><use href="#desel"/></svg></span>
    <span class="b"><svg class="i"><use href="#attr"/></svg></span>
    <span class="b"><svg class="i"><use href="#abac"/></svg></span>
    <span class="b act"><svg class="i"><use href="#gear"/></svg></span>
    <span class="b"><svg class="i"><use href="#sigma"/></svg></span>
    <span class="b"><svg class="i"><use href="#ruler"/></svg></span><i class="dd nr"></i>
    <span class="b"><svg class="i"><use href="#tip"/></svg></span>
    <span class="b"><svg class="i"><use href="#ttext"/></svg></span><i class="dd"></i>
  </div>

  <div class="tb">
    <i class="grip lead"></i>
    <span class="b"><svg class="i"><use href="#dsm"/></svg></span>
    <span class="b"><svg class="i"><use href="#box"/></svg></span>
    <span class="b"><svg class="i"><use href="#newv"/></svg></span>
    <span class="b"><svg class="i"><use href="#fstar"/></svg></span>
    <span class="b"><svg class="i"><use href="#chip"/></svg></span>
    <i class="sep"></i>
    <span class="b"><svg class="i"><use href="#meshs"/></svg></span>
    <i class="grip g17"></i>
    <span class="b"><svg class="i"><use href="#pens"/></svg></span>
    <span class="b"><svg class="i"><use href="#pencil"/></svg></span>
    <span class="b"><svg class="i"><use href="#savep"/></svg></span>
    <span class="b"><svg class="i"><use href="#pts"/></svg></span>
    <span class="b"><svg class="i"><use href="#vtool"/></svg></span><i class="dd pale"></i>
    <span class="b"><svg class="i"><use href="#rows"/></svg></span>
    <span class="b"><svg class="i"><use href="#trash"/></svg></span>
    <span class="b"><svg class="i"><use href="#sciss"/></svg></span>
    <span class="b"><svg class="i"><use href="#copyi"/></svg></span>
    <span class="b"><svg class="i"><use href="#paste"/></svg></span>
    <span class="b"><svg class="i"><use href="#undo"/></svg></span>
    <span class="b"><svg class="i"><use href="#redo"/></svg></span>
    <i class="grip g13"></i>
    <span class="b"><svg class="i"><use href="#lbl"/></svg></span>
    <span class="b"><svg class="i"><use href="#diag"/></svg></span>
    <i class="sep"></i>
    <span class="b"><svg class="i"><use href="#pin"/></svg></span>
    <span class="b"><svg class="i"><use href="#lblr"/></svg></span>
    <i class="sep"></i>
    <span class="b"><svg class="i"><use href="#ab1"/></svg></span>
    <span class="b"><svg class="i"><use href="#ab2"/></svg></span>
    <span class="b"><svg class="i"><use href="#ab3"/></svg></span>
    <span class="b"><svg class="i"><use href="#ab4"/></svg></span>
    <span class="b"><svg class="i"><use href="#ab5"/></svg></span>
    <i class="grip g18"></i>
    <span class="b"><svg class="i"><use href="#gplus"/></svg></span>
    <span class="b"><svg class="i"><use href="#gsearch"/></svg></span>
    <i class="grip g16"></i>
    <span class="b"><svg class="i"><use href="#pyc"/></svg></span>
    <span class="b"><svg class="i"><use href="#earth"/></svg></span>
    <i class="grip g16"></i>
    <span class="b"><svg class="i"><use href="#help"/></svg></span>
    <i class="grip g15"></i>
    <span class="b"><svg class="i"><use href="#topo"/></svg></span>
    <span class="b"><svg class="i"><use href="#tsync"/></svg></span>
  </div>

  <div class="tb last">
    <i class="grip lead"></i>
    <span class="b"><svg class="i"><use href="#graph"/></svg></span>
    <i class="grip g16"></i>
    <span class="b"><svg class="i"><use href="#zgreen"/></svg></span>
    <span class="b"><svg class="i"><use href="#medit"/></svg></span>
    <i class="grip g16"></i>
  </div>

  <main class="main">
    <aside class="vbar">
      <i class="hgrip"></i>
      <span class="vb"><svg class="i"><use href="#ap"/></svg></span>
      <span class="vb"><svg class="i"><use href="#ar"/></svg></span>
      <span class="vb"><svg class="i"><use href="#am"/></svg></span>
      <span class="vb"><svg class="i"><use href="#ac"/></svg></span>
      <span class="vb"><svg class="i"><use href="#af"/></svg></span>
      <span class="vb"><svg class="i"><use href="#amv"/></svg></span>
      <span class="vb"><svg class="i"><use href="#apg"/></svg><i class="dd"></i></span>
      <span class="vb"><svg class="i"><use href="#agb"/></svg><i class="dd"></i></span>
      <span class="vb"><svg class="i"><use href="#ags"/></svg></span>
      <span class="vb"><svg class="i"><use href="#agv"/></svg><i class="dd"></i></span>
      <span class="vb"><svg class="i"><use href="#box"/></svg><i class="dd"></i></span>
    </aside>

    <section class="dock left">
      <div class="ph"><span>Browser</span><span class="pbtns"><svg class="pb" viewBox="0 0 13 13"><rect x=".5" y=".5" width="12" height="12" rx="2" fill="#f4f4f4" stroke="#888"/><path d="M5.500 2.500h5v5h-5zM2.500 5.500h5v5h-5z" fill="none" stroke="#444"/></svg><svg class="pb" viewBox="0 0 13 13"><rect x=".5" y=".5" width="12" height="12" rx="2" fill="#f4f4f4" stroke="#888"/><path d="M3 3l7 7M10 3l-7 7" stroke="#333" stroke-width="1.800"/></svg></span></div>
      <div class="ptools">
        <svg class="pi"><use href="#cbtn"/></svg>
        <svg class="pi"><use href="#refresh"/></svg>
        <svg class="pi"><use href="#funnel"/></svg>
        <svg class="pi"><use href="#coll"/></svg>
        <svg class="pi"><use href="#infoi"/></svg>
      </div>
      <div class="box browser">
        <div class="boxrow">
          <div class="tree">
            <div class="tr"><i class="ar none"></i><svg class="ti16"><use href="#star"/></svg><span>Favorites</span></div>
            <div class="tr"><i class="ar"></i><svg class="ti16"><use href="#bmk"/></svg><span>Spatial Bookmarks</span></div>
            <div class="tr"><i class="ar"></i><svg class="ti16"><use href="#gpk"/></svg><span>GeoPackage</span></div>
            <div class="tr"><i class="ar"></i><svg class="ti16"><use href="#home"/></svg><span>Home</span></div>
            <div class="tr"><i class="ar"></i><svg class="ti16"><use href="#feather"/></svg><span>SpatiaLite</span></div>
            <div class="tr"><i class="ar none"></i><svg class="ti16"><use href="#pg"/></svg><span>PostGIS</span></div>
            <div class="tr"><i class="ar none"></i><svg class="ti16"><use href="#mss"/></svg><span>MSSQL</span></div>
            <div class="tr"><i class="ar none"></i><svg class="ti16"><use href="#ora"/></svg><span>Oracle</span></div>
            <div class="tr"><i class="ar none"></i><svg class="ti16"><use href="#db2"/></svg><span>DB2</span></div>
            <div class="tr"><i class="ar"></i><svg class="ti16"><use href="#globe"/></svg><span>WMS/WMTS</span></div>
            <div class="tr"><i class="ar down"></i><svg class="ti16"><use href="#globe"/></svg><span>XYZ Tiles</span></div>
            <div class="tr sub"><svg class="ti12"><use href="#checker"/></svg><span>Cape Town Topo Map NGI 1:50k (2010 Series)</span></div>
            <div class="tr sub"><svg class="ti12"><use href="#checker"/></svg><span>OSM World Map</span></div>
          </div>
          <div class="vsb"><i class="sa up"></i><i class="track t1"></i><i class="thumb t2"></i><i class="sa dn"></i></div>
        </div>
        <div class="hsb"><i class="sa lf"></i><i class="track ht"></i><i class="thumb hth"></i><i class="sa rt"></i></div>
      </div>
      <i class="split"></i>
      <div class="ph"><span>Layers</span><span class="pbtns"><svg class="pb" viewBox="0 0 13 13"><rect x=".5" y=".5" width="12" height="12" rx="2" fill="#f4f4f4" stroke="#888"/><path d="M5.500 2.500h5v5h-5zM2.500 5.500h5v5h-5z" fill="none" stroke="#444"/></svg><svg class="pb" viewBox="0 0 13 13"><rect x=".5" y=".5" width="12" height="12" rx="2" fill="#f4f4f4" stroke="#888"/><path d="M3 3l7 7M10 3l-7 7" stroke="#333" stroke-width="1.800"/></svg></span></div>
      <div class="ptools ly">
        <svg class="pi"><use href="#brush"/></svg>
        <svg class="pi"><use href="#lydup"/></svg>
        <svg class="pi"><use href="#eye"/></svg>
        <svg class="pi"><use href="#funnel"/></svg>
        <svg class="pi eps"><use href="#eps"/></svg><i class="dd pale small"></i>
        <svg class="pi"><use href="#exp"/></svg>
        <svg class="pi"><use href="#coll"/></svg>
        <svg class="pi"><use href="#rmv"/></svg>
      </div>
      <div class="box layers">
        <div class="lr"><i class="cb"></i><span class="sw"><i class="dot"></i></span><span class="ln sel">schools_</span></div>
        <div class="lr"><i class="cb"><svg class="ckm"><use href="#ck"/></svg></i><span class="sw fill pink"></span><span class="lb">Buffered</span><svg class="ind"><use href="#chipi"/></svg></div>
        <div class="lr"><i class="cb"><svg class="ckm"><use href="#ck"/></svg></i><span class="sw"><i class="dot"></i></span><span class="lb">pofw</span></div>
        <div class="lr"><i class="cb"></i><span class="sw"><i class="line or"></i></span><span class="ln">roads</span></div>
        <div class="lr"><i class="cb"></i><span class="sw"><i class="line pu"></i></span><span class="ln">waterway</span><svg class="ind"><use href="#chipi"/></svg></div>
        <div class="lr"><i class="cb"></i><span class="sw fill olive"></span><span class="ln">buildings_cleaned [2132]</span><svg class="ind"><use href="#chipi"/></svg></div>
        <div class="lr"><i class="cb"></i><span class="sw fill red"></span><span class="ln">buildings [2133]</span></div>
        <div class="lr"><i class="cb"></i><span class="sw fill grn"></span><span class="ln">landuse</span></div>
        <div class="lr"><i class="cb"><svg class="ckm"><use href="#ck"/></svg></i><span class="sw fill sand"></span><span class="lb">ashanti_admin_boundary</span></div>
      </div>
    </section>

    <section class="map">
      <svg class="mapsvg" viewBox="370 161 624 538">
        <polygon class="region" filter="url(#rough)" points="468.3,251 476,236 485,237.7 495,237.3 501.7,247.3 510,249.3 518,248.3 525,241.7 533,244.3 541.7,232.7 543,235 549,233.3 549,246.7 557.700,266 566.700,267.700 570,273.300 578,276 583,273.300 598,275.700 603,270 608,266.700 620,251.700 635,255 636.700,241.700 635,240 646.700,226.700 658,206.700 670,198.300 690,193.300 689.300,203.300 695,208.300 696.700,216.700 708,229 718.300,227.300 736.700,234 750,232.700 756,226 765,217.700 778.300,217.700 793.300,225 808.300,221.700 830,226 843.300,221.700 856.700,216 866.700,225 866.700,243.300 871.700,253.300 882.300,267.300 895,265.700 923.300,271.700 946.700,278.300 958.300,284.300 970.700,287.700 974,300 977.300,305.700 963.300,310 958.300,320 938.300,328.300 920,326 906.700,326 893.300,323.300 878.300,319.300 871.700,314 883.300,348.300 890.700,355 887.300,372.700 870,372.700 866,378.700 846.700,373.300 839.300,378.300 839.300,400 830,416.700 818.300,416.700 813.300,420 800,417.700 793.300,424.300 778.300,428.700 787.300,435 780.700,446.700 780,463.300 789.300,456.700 795,457.700 797.700,466.700 785,480 775,493.300 771.700,503.300 770,513.300 768.300,518.300 760,521.700 743.300,533.300 738.300,550 741.700,561.700 738.300,575 723.300,575 723.300,590 720,596.700 721.700,603.300 708.300,628.300 714.300,636.700 713.300,645 701.700,656.700 693.300,659.300 690,650 673.300,646.700 660,651.700 648.300,655 649.300,665 645,666.700 634,661.700 639.300,655 628.300,645 603.300,646.700 593.300,651 586.700,645 580,641.700 566.700,637.300 556.700,626.700 555,619.300 543.300,625 535,619.300 528.300,625 513.300,611.700 510,596.700 501.700,598.300 495,576.700 501.700,551.700 486.700,550 471.700,543.300 470,535 458.300,530 445,541.700 448.300,533.300 441.700,501.700 435,496.700 415,496.700 410,500 413.300,513.300 400,537.700 390,534 391.700,518.300 385.700,511.700 390,500 403.300,486.700 405,468.300 398.300,456.700 394,451.700 411.700,441.700 423.300,443.300 431.700,430 436,415 423.300,411.700 411.700,402.700 400,404 394.300,405 401.700,393.300 413.300,383.300 430,372 445,367 460,352.700 466.700,350 473.300,359 480,355 491.700,350 503.300,340 518.300,335.700 524,325 524,312.700 540,306 552.700,292.700 540,286.700 529.300,292.300 519.300,289.300 515,280 503.300,275 492.700,278.300"/>
        <use href="#p" x="515" y="251"/><use href="#p" x="517.300" y="253.300"/><use href="#p" x="529" y="267"/><use href="#p" x="530.700" y="273.300"/><use href="#p" x="532" y="276.300"/><use href="#p" x="548.700" y="284.700"/><use href="#p" x="552" y="288"/><use href="#p" x="562" y="303"/><use href="#p" x="576.700" y="323"/><use href="#p" x="580" y="332"/><use href="#p" x="582" y="336.700"/><use href="#p" x="586.700" y="362"/><use href="#p" x="590.700" y="368.700"/><use href="#p" x="594" y="374"/><use href="#p" x="590" y="380.300"/><use href="#p" x="594" y="376.700"/><use href="#p" x="598" y="386"/><use href="#p" x="452" y="362"/><use href="#p" x="532" y="378"/><use href="#p" x="660" y="245"/><use href="#p" x="676" y="258"/><use href="#p" x="735.700" y="236"/><use href="#p" x="750" y="232.700"/><use href="#p" x="756" y="230.700"/><use href="#p" x="590" y="381.700"/><use href="#p" x="597.700" y="386"/><use href="#p" x="601" y="393"/><use href="#p" x="599.700" y="404"/><use href="#p" x="600" y="410"/><use href="#p" x="600" y="414.700"/><use href="#p" x="625.700" y="410"/><use href="#p" x="668" y="399"/><use href="#p" x="668" y="401.700"/><use href="#p" x="667" y="400.500"/><use href="#p" x="600.700" y="425.700"/><use href="#p" x="609.700" y="430"/><use href="#p" x="603.700" y="433.300"/><use href="#p" x="611.700" y="436.700"/><use href="#p" x="604" y="441"/><use href="#p" x="604" y="448.300"/><use href="#p" x="616" y="443.300"/><use href="#p" x="613.300" y="448.300"/><use href="#p" x="609.300" y="452.700"/><use href="#p" x="614.700" y="453.300"/><use href="#p" x="610" y="443.300"/><use href="#p" x="606" y="437"/><use href="#p" x="611" y="441"/><use href="#p" x="603" y="445"/><use href="#p" x="608" y="449"/><use href="#p" x="612" y="451"/><use href="#p" x="617" y="447"/><use href="#p" x="580" y="438"/><use href="#p" x="581.300" y="441.300"/><use href="#p" x="585" y="441.700"/><use href="#p" x="589" y="440.700"/><use href="#p" x="594" y="450.700"/><use href="#p" x="598" y="465.700"/><use href="#p" x="633.700" y="437.700"/><use href="#p" x="647.300" y="435"/><use href="#p" x="653.300" y="434.700"/><use href="#p" x="657" y="443.700"/><use href="#p" x="711" y="462.700"/><use href="#p" x="715" y="462"/><use href="#p" x="718.300" y="461.300"/><use href="#p" x="721.700" y="461.700"/><use href="#p" x="751" y="449.700"/><use href="#p" x="751" y="457"/><use href="#p" x="681" y="493"/><use href="#p" x="621" y="506.700"/><use href="#p" x="617.700" y="508.700"/><use href="#p" x="585" y="570.700"/><use href="#p" x="588.300" y="571.700"/><use href="#p" x="591.700" y="572.700"/><use href="#p" x="594.300" y="573.700"/><use href="#p" x="589" y="570"/><use href="#p" x="593" y="575"/><use href="#p" x="590" y="574"/>
      </svg>
    </section>

    <section class="dock right">
      <div class="ph"><span>Processing Toolbox</span><span class="pbtns"><svg class="pb" viewBox="0 0 13 13"><rect x=".5" y=".5" width="12" height="12" rx="2" fill="#f4f4f4" stroke="#888"/><path d="M5.500 2.500h5v5h-5zM2.500 5.500h5v5h-5z" fill="none" stroke="#444"/></svg><svg class="pb" viewBox="0 0 13 13"><rect x=".5" y=".5" width="12" height="12" rx="2" fill="#f4f4f4" stroke="#888"/><path d="M3 3l7 7M10 3l-7 7" stroke="#333" stroke-width="1.800"/></svg></span></div>
      <div class="ptools pr">
        <svg class="pi"><use href="#gears"/></svg>
        <svg class="pi"><use href="#py"/></svg>
        <svg class="pi"><use href="#clockg"/></svg>
        <span class="pact"><svg class="pi"><use href="#docg"/></svg></span>
        <i class="psep"></i>
        <svg class="pi"><use href="#note"/></svg>
        <i class="psep"></i>
        <svg class="pi"><use href="#wrench"/></svg>
      </div>
      <div class="search"><svg class="si"><use href="#srch"/></svg><span>Search...</span></div>
      <div class="box ptree">
        <div class="tree">
          <div class="tr rt2 cur"><i class="ar"></i><svg class="ti16"><use href="#clock"/></svg><span>Recently used</span></div>
          <div class="tr rt2"><i class="ar"></i><svg class="ti16"><use href="#sq"/></svg><span>Cartography</span></div>
          <div class="tr rt2"><i class="ar"></i><svg class="ti16"><use href="#sq"/></svg><span>Database</span></div>
          <div class="tr rt2"><i class="ar"></i><svg class="ti16"><use href="#sq"/></svg><span>File tools</span></div>
          <div class="tr rt2"><i class="ar"></i><svg class="ti16"><use href="#sq"/></svg><span>Graphics</span></div>
          <div class="tr rt2"><i class="ar"></i><svg class="ti16"><use href="#sq"/></svg><span>Interpolation</span></div>
          <div class="tr rt2"><i class="ar"></i><svg class="ti16"><use href="#sq"/></svg><span>Layer tools</span></div>
          <div class="tr rt2"><i class="ar"></i><svg class="ti16"><use href="#sq"/></svg><span>Network analysis</span></div>
          <div class="tr rt2"><i class="ar"></i><svg class="ti16"><use href="#sq"/></svg><span>Raster analysis</span></div>
          <div class="tr rt2"><i class="ar"></i><svg class="ti16"><use href="#sq"/></svg><span>Raster terrain analysis</span></div>
        </div>
        <div class="vsb"><i class="sa up"></i><i class="track t3"></i><i class="thumb t4"></i><i class="sa dn"></i></div>
      </div>
      <i class="split sr"></i>
      <div class="ph rv"><span>Results Viewer</span><span class="pbtns"><svg class="pb" viewBox="0 0 13 13"><rect x=".5" y=".5" width="12" height="12" rx="2" fill="#f4f4f4" stroke="#888"/><path d="M5.500 2.500h5v5h-5zM2.500 5.500h5v5h-5z" fill="none" stroke="#444"/></svg><svg class="pb" viewBox="0 0 13 13"><rect x=".5" y=".5" width="12" height="12" rx="2" fill="#f4f4f4" stroke="#888"/><path d="M3 3l7 7M10 3l-7 7" stroke="#333" stroke-width="1.800"/></svg></span></div>
      <div class="box results">
        <div class="rr cur"><svg class="ti16"><use href="#stack"/></svg><span>listuniquevalues [summary] [08:55:16PM]</span></div>
        <div class="rr"><svg class="ti16"><use href="#stackg"/></svg><span>listuniquevalues [summary] [08:52:31PM]</span></div>
        <div class="rr"><svg class="ti16"><use href="#stackg"/></svg><span>listuniquevalues [summary] [08:41:58PM]</span></div>
        <div class="rr"><svg class="ti16"><use href="#sumi"/></svg><span>Statistics [11:34:36PM]</span></div>
        <div class="rr"><svg class="ti16"><use href="#sumi"/></svg><span>Statistics [11:31:25PM]</span></div>
        <div class="rr"><svg class="ti16"><use href="#sumi"/></svg><span>Statistics [11:23:12PM]</span></div>
        <div class="rr"><svg class="ti16"><use href="#sumi"/></svg><span>Statistics [11:16:14PM]</span></div>
      </div>
      <i class="split sr2"></i>
      <div class="box info">
        <b>Algorithm:</b> listuniquevalues [summary]<br>
        <b>File path:</b> <a>C:<br>\Users\USER\AppData\Local\Temp\processing_<span class="hx">6e7da3802a4e4fd88654da<br>083805d63e\605788845ae614.html</span></a>
      </div>
    </section>
  </main>

  <footer class="status">
    <div class="loc"><svg class="si"><use href="#srch"/></svg><span>Type to locate (Ctrl+K)</span></div>
    <span class="msgt">1 legend entries removed.</span>
    <div class="prog"></div>
    <span class="coordl">Coordinate</span>
    <div class="field coord">371543,705572</div>
    <svg class="sti m1"><use href="#mouse"/></svg>
    <span class="scl">Scale</span>
    <div class="field scale"><span>178340432</span><i class="combo"></i></div>
    <svg class="sti lk"><use href="#lock"/></svg>
    <span class="mgl">Magnifier</span>
    <div class="field magn"><span>100%</span><i class="spin"></i></div>
    <span class="rotl">Rotation</span>
    <div class="field rotn"><span>0.0 °</span><i class="spin"></i></div>
    <i class="cb rnd"><svg class="ckm"><use href="#ck"/></svg></i>
    <span class="rndl">Render</span>
    <svg class="sti gl"><use href="#gs"/></svg>
    <span class="epsg">EPSG:2136</span>
    <svg class="sti ms"><use href="#msg"/></svg>
  </footer>

  <div class="wm"><div class="wm1">Activate Windows</div><div class="wm2">Go to Settings to activate Windows.</div></div>
</div>
</body>
</html>
```
FILE: styles.css
```css
* { box-sizing: border-box; }
html, body { margin: 0; padding: 0; }
body { width: 1366px; height: 728px; overflow: hidden; background: #f0f0f0; font: 11.5px/18px "Open Sans", "Noto Sans", sans-serif; letter-spacing: -.15px; color: #111; }
.defs { display: block; width: 0; height: 0; }
i { display: block; font-style: normal; }
svg { display: block; flex: none; overflow: hidden; }
b { letter-spacing: -.4px; }
.ts { font-family: "Open Sans", sans-serif; letter-spacing: 0; }
.tb2 { font-family: "Liberation Sans", sans-serif; font-weight: 700; letter-spacing: 0; }
.ti { font-family: "Liberation Serif", serif; font-style: italic; font-weight: 700; }
.tsg { font-family: "Liberation Serif", serif; font-weight: 700; letter-spacing: 0; }

.app { position: relative; width: 1366px; height: 728px; display: flex; flex-direction: column; }

.titlebar { height: 23px; background: #fff; display: flex; align-items: center; padding-left: 2px; }
.logo { width: 18px; height: 18px; margin-top: -2px; }
.title { margin-left: 3px; margin-top: -1px; color: #222; }
.winbtns { margin-left: auto; margin-right: 2px; display: flex; }
.wb { width: 46px; height: 23px; }

.menubar { height: 20px; background: #f0f0f0; border-bottom: 1px solid #c8c8c8; display: flex; gap: 13px; padding-left: 10px; line-height: 19px; font-size: 12px; letter-spacing: -.25px; }
.menubar u { text-underline-offset: 1px; }
.menubar span:nth-child(3) { margin-left: 2px; }
.menubar span:nth-child(6) { margin-left: 1px; }
.menubar span:nth-child(7) { margin-left: 1px; }
.menubar span:nth-child(8) { margin-left: -1px; }
.menubar span:nth-child(9) { margin-left: -1px; }
.menubar span:nth-child(10) { margin-left: -2px; }
.menubar span:nth-child(11) { margin-left: 1px; }
.menubar span:nth-child(13) { margin-left: 1px; }

.tb { height: 39px; flex: none; display: flex; align-items: center; padding-left: 2.500px; border-bottom: 1px solid #c4c4c4; background: linear-gradient(#fbfbfb, #f1f1f1); }
.tb.last { height: 38px; }
.b { width: 33px; height: 32px; flex: none; display: flex; align-items: center; justify-content: center; border: 1px solid transparent; border-radius: 2px; }
.b.hov { background: #fff; border-color: #c8c8c8; }
.b.act { background: #dcdcdc; border-color: #b0b0b0; }
.i { width: 24px; height: 24px; }
.off { opacity: .4; filter: grayscale(1); }
.grip { flex: none; width: 15px; height: 26px; display: flex; align-items: center; justify-content: center; }
.grip::before { content: ""; width: 6px; height: 21px; background: radial-gradient(circle at center, #b4b4b4 0, #b4b4b4 45%, transparent 55%) 0 0 / 3px 3px; }
.grip.lead { width: 10px; }
.grip.g13 { width: 13.500px; }
.grip.g16 { width: 16px; }
.grip.g17 { width: 17px; }
.grip.g18 { width: 18.500px; }
.grip.g155 { width: 15.500px; }
.sep { flex: none; width: 7px; height: 22px; background: linear-gradient(#d8d8d8, #d8d8d8) center / 1px 100% no-repeat; }
.dd { flex: none; width: 12.500px; height: 12px; background: linear-gradient(45deg, transparent 50%, #555 50%) 1px 4px / 5px 5px no-repeat, linear-gradient(315deg, transparent 50%, #555 50%) 6px 4px / 5px 5px no-repeat; }
.dd.pale { opacity: .35; }
.dd.nr { width: 10.500px; }

.main { flex: none; height: 541px; display: flex; }
.vbar { width: 52px; flex: none; display: flex; flex-direction: column; border-right: 1px solid #bdbdbd; background: linear-gradient(90deg, #fafafa, #f1f1f1); padding: 5px 0 0 8px; }
.hgrip { width: 18px; height: 6px; margin: 0 0 0 11px; background: radial-gradient(circle at center, #b4b4b4 0, #b4b4b4 45%, transparent 55%) 0 0 / 3px 3px; }
.vb { height: 32.300px; flex: none; display: flex; align-items: center; }
.vb .dd { margin-left: 4px; }

.dock { flex: none; display: flex; flex-direction: column; }
.dock.left { width: 312px; padding: 0 1px; }
.dock.right { width: 366px; }
.ph { height: 22px; flex: none; display: flex; justify-content: space-between; align-items: center; padding: 0 1px 0 3px; }
.right .ph { padding-left: 4px; }
.pbtns { display: flex; gap: 1px; }
.right .pbtns { gap: 2px; }
.pb { width: 13px; height: 13px; }
.ptools { height: 29px; flex: none; display: flex; gap: 7px; padding: 4px 0 0 5px; }
.pi { width: 18px; height: 18px; }
.ptools.ly .eps { margin-right: -6px; }
.ptools.ly .small { margin-top: 3px; margin-right: -4px; }
.ptools.pr { padding-left: 7px; gap: 7px; align-items: flex-start; }
.pact { width: 24px; height: 23px; margin: -1px -3px 0 -3px; background: #dcdcdc; border: 1px solid #b0b0b0; border-radius: 2px; display: flex; align-items: center; justify-content: center; }
.psep { width: 1px; height: 18px; margin: 0 1px; background: #d8d8d8; }

.box { background: #fff; border: 1px solid #a8a8a8; flex: none; overflow: hidden; }
.browser { height: 237px; display: flex; flex-direction: column; }
.boxrow { flex: 1; min-height: 0; display: flex; }
.tree { flex: 1; min-width: 0; overflow: hidden; padding-top: 1px; }
.tr { height: 18px; display: flex; align-items: center; padding-left: 6px; white-space: nowrap; }
.tr > span { margin-left: 6px; }
.ar { width: 6px; height: 8px; flex: none; margin-right: 10px; border-left: 5px solid #4a4a4a; border-top: 4px solid transparent; border-bottom: 4px solid transparent; }
.ar.none { border-color: transparent; }
.ar.down { border: 0; height: 5px; width: 9px; margin-left: -1px; margin-right: 8px; background: linear-gradient(45deg, transparent 50%, #4a4a4a 50%) left / 5px 5px no-repeat, linear-gradient(315deg, transparent 50%, #4a4a4a 50%) right / 5px 5px no-repeat; }
.ti16 { width: 16px; height: 16px; }
.ti12 { width: 12px; height: 12px; }
.tr.sub { padding-left: 44px; }
.vsb { width: 14px; flex: none; display: flex; flex-direction: column; border-left: 1px solid #e0e0e0; }
.sa { flex: none; width: 13px; height: 14px; background: #f4f4f4 center no-repeat; }
.sa.up { background-image: linear-gradient(135deg, transparent 50%, #555 50%), linear-gradient(225deg, transparent 50%, #555 50%); background-size: 5px 5px; background-position: 2px 5px, 7px 5px; }
.sa.dn { background-image: linear-gradient(45deg, transparent 50%, #555 50%), linear-gradient(315deg, transparent 50%, #555 50%); background-size: 5px 5px; background-position: 2px 5px, 7px 5px; }
.track { background: #fff; }
.thumb { background: #e4e4e4; border: 1px solid #dadada; }
.t1 { flex: 0 0 105px; }
.t2 { flex: 1; }
.t3 { flex: 0 0 62px; }
.t4 { flex: 1; }
.hsb { height: 14px; flex: none; display: flex; border-top: 1px solid #e0e0e0; padding-right: 14px; }
.hsb .sa { width: 13px; height: 13px; }
.sa.lf { background-image: linear-gradient(135deg, transparent 50%, #555 50%), linear-gradient(45deg, transparent 50%, #555 50%); background-size: 5px 5px; background-position: 4px 1px, 4px 6px; }
.sa.rt { background-image: linear-gradient(225deg, transparent 50%, #555 50%), linear-gradient(315deg, transparent 50%, #555 50%); background-size: 5px 5px; background-position: 4px 1px, 4px 6px; }
.ht { flex: 1; }
.hth { width: 7px; }
.split { height: 6px; flex: none; background: radial-gradient(circle at center, #b4b4b4 0, #b4b4b4 45%, transparent 55%) center / 3px 3px repeat-x; background-clip: content-box; padding: 1px 147px; }
.split.sr { padding: 2px 168px 1px 176px; }
.split.sr2 { height: 5px; padding: 1px 168px 1px 176px; }
.layers { height: 195px; }
.lr { height: 18px; display: flex; align-items: center; padding-left: 22px; position: relative; }
.lr:first-child { margin-top: 1px; }
.lr::after { content: ""; position: absolute; right: 1px; top: 1px; bottom: 1px; width: 3px; background: #ececec; }
.cb { width: 14px; height: 14px; flex: none; background: #fff; border: 1px solid #c4c4c4; display: flex; align-items: center; justify-content: center; }
.ckm { width: 12px; height: 12px; }
.sw { width: 16px; height: 16px; flex: none; margin-left: 6px; display: flex; align-items: center; justify-content: center; }
.sw.fill { border: 1px solid #7a7a6e; }
.pink { background: #e1568b; }
.olive { background: #bdd04a; }
.red { background: #b84a4e; }
.grn { background: #6f9b6d; }
.sand { background: #f7ead8; }
.dot { width: 8px; height: 8px; border-radius: 50%; background: #71a95f; border: 1px solid #cfd8c8; }
.line { width: 16px; height: 1px; }
.or { background: #ec8355; }
.pu { background: #a582c9; }
.ln, .lb { margin-left: 6px; font-weight: 700; white-space: nowrap; }
.lb { color: #000; letter-spacing: -.35px; }
.ln { font-style: italic; color: #808080; letter-spacing: .05px; }
.ln.sel { flex: 1; height: 18px; margin: 0 2px 0 4px; padding-left: 2px; background: linear-gradient(#f1f8fd, #dceefa); border: 1px solid #b5d8f2; line-height: 17px; text-decoration: underline; position: relative; z-index: 1; }
.ind { width: 15px; height: 16px; margin-left: auto; margin-right: 5px; background: #ececec; border-radius: 2px; }

.map { width: 626px; flex: none; margin: 2px 5px 1px 5px; background: #fff; border: 1px solid #a8a8a8; }
.mapsvg { width: 624px; height: 536px; }
.region { fill: #f6ead8; stroke: #4d4d4d; stroke-width: .9; }

.search { height: 22px; flex: none; margin-right: 1px; border: 1px solid #c0c0c0; border-radius: 2px; background: #fff; display: flex; align-items: center; padding-left: 8px; color: #a8a8a8; font-style: italic; font-size: 11px; }
.si { width: 14px; height: 14px; margin-right: 6px; }
.ptree { height: 176px; margin-right: 1px; display: flex; }
.tr.rt2 { padding-left: 7px; }
.tr.cur, .rr.cur { background: #f0f0f0; }
.ph.rv { margin-bottom: -1px; }
.results { height: 190px; }
.rr { height: 18px; display: flex; align-items: center; padding-left: 3px; gap: 6px; }
.info { height: 69px; padding: 5px 4px; line-height: 13px; white-space: nowrap; }
.info a { color: #0000ee; text-decoration: underline; letter-spacing: -.55px; }
.hx { letter-spacing: -.6px; }

.status { flex: none; height: 28px; display: flex; align-items: center; background: #f0f0f0; letter-spacing: -.28px; }
.loc { margin-left: 5px; width: 198px; height: 23px; background: #fff; border: 1px solid #c0c0c0; border-radius: 2px; display: flex; align-items: center; padding-left: 8px; color: #777; flex: none; }
.loc .si { margin-right: 5px; }
.msgt { margin-left: 9px; width: 165px; flex: none; white-space: nowrap; }
.prog { width: 170px; height: 12px; flex: none; border-radius: 2px; border: 1px solid #1566c0; background: repeating-linear-gradient(115deg, #0a78dc 0 14px, #0f7cde 14px 16px); }
.coordl { margin-left: 13px; width: 57px; flex: none; }
.field { height: 20px; flex: none; background: #fff; border: 1px solid #b8b8b8; border-radius: 2px; display: flex; align-items: center; }
.coord { width: 105px; justify-content: center; }
.sti { width: 16px; height: 16px; }
.m1 { margin-left: 4px; }
.scl { margin-left: 11px; width: 30px; flex: none; }
.scale { width: 80px; padding-left: 2px; justify-content: space-between; }
.combo { width: 19px; height: 18px; border-left: 1px solid #ddd; background: linear-gradient(45deg, transparent 50%, #666 50%) 4px 6px / 5px 5px no-repeat, linear-gradient(315deg, transparent 50%, #666 50%) 9px 6px / 5px 5px no-repeat; }
.lk { margin-left: 10px; }
.mgl { margin-left: 6px; width: 50px; flex: none; }
.magn { width: 86px; padding-left: 4px; justify-content: space-between; }
.rotl { margin-left: 8px; width: 51px; flex: none; }
.rotn { width: 83px; padding-left: 4px; justify-content: space-between; }
.spin { width: 14px; height: 18px; border-left: 1px solid #ddd; background: linear-gradient(135deg, transparent 50%, #555 50%) 2px 3px / 5px 4px no-repeat, linear-gradient(225deg, transparent 50%, #555 50%) 7px 3px / 5px 4px no-repeat, linear-gradient(45deg, transparent 50%, #555 50%) 2px 11px / 5px 4px no-repeat, linear-gradient(315deg, transparent 50%, #555 50%) 7px 11px / 5px 4px no-repeat; }
.cb.rnd { margin-left: 8px; }
.rndl { margin-left: 3px; width: 51px; flex: none; }
.epsg { margin-left: 5px; width: 65px; flex: none; white-space: nowrap; }
.ms { margin-left: 8px; }

.wm { position: absolute; left: 1073px; top: 648px; color: rgba(90, 90, 90, .5); pointer-events: none; white-space: nowrap; letter-spacing: 0; }
.wm1 { font-size: 19px; line-height: 28px; }
.wm2 { font-size: 14.300px; line-height: 18px; }
```
